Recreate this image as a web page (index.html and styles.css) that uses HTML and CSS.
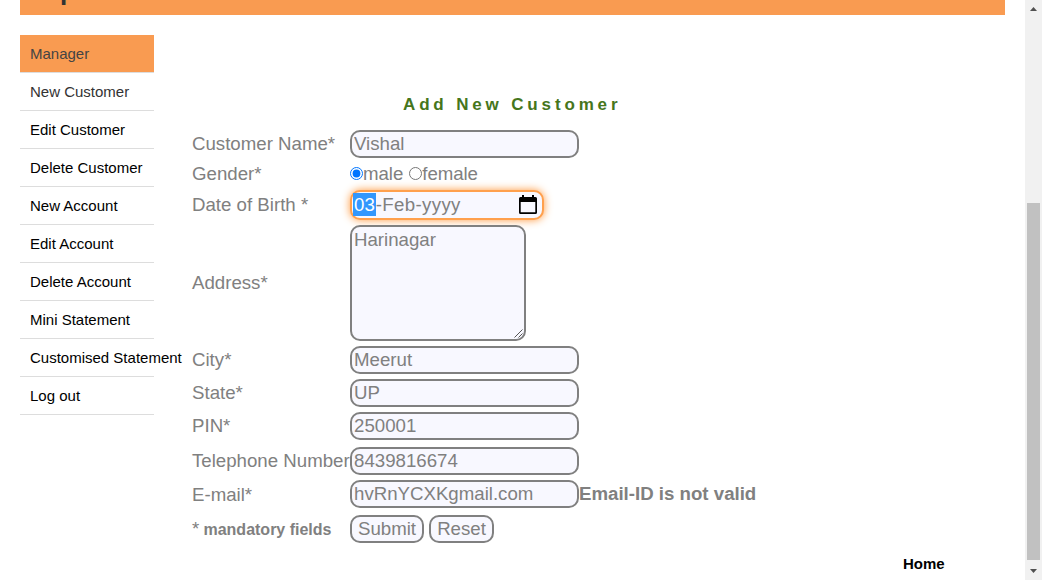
FILE: index.html
```html
<!DOCTYPE html>
<html lang="en">
<head>
<meta charset="utf-8">
<title>Add New Customer</title>
<link rel="stylesheet" href="styles.css">
</head>
<body>
<div class="page">
  <header class="banner"><span class="banner-text">p</span></header>
  <div class="columns">
    <nav class="menu">
      <a class="active">Manager</a>
      <a class="muted">New Customer</a>
      <a>Edit Customer</a>
      <a>Delete Customer</a>
      <a>New Account</a>
      <a>Edit Account</a>
      <a>Delete Account</a>
      <a>Mini Statement</a>
      <a>Customised Statement</a>
      <a>Log out</a>
    </nav>
    <main class="content">
      <h1 class="title">Add New Customer</h1>
      <form class="form">
        <label>Customer Name*</label>
        <div class="cell"><input class="field" type="text" value="Vishal"></div>
        <label>Gender*</label>
        <div class="cell gender"><input class="radio" type="radio" name="gender" checked><span>male</span><input class="radio second" type="radio" name="gender"><span>female</span></div>
        <label>Date of Birth *</label>
        <div class="cell">
          <div class="date"><span class="selected">03</span><span class="rest">-Feb-yyyy</span>
            <svg class="calendar" width="18" height="20" viewBox="0 0 18 20"><path fill="#000" fill-rule="evenodd" d="M1.500 2H3V0h2v2h8V0h2v2h1.500Q18 2 18 3.500v14Q18 19 16.500 19h-15Q0 19 0 17.500v-14Q0 2 1.500 2zM1.700 7v10.300h14.600V7z"/></svg>
          </div>
        </div>
        <label>Address*</label>
        <div class="cell"><div class="area">Harinagar
          <svg class="grip" width="9" height="9" viewBox="0 0 9 9"><path d="M0.500 8.500l8-8M4.500 8.500l4-4" stroke="#555" fill="none"/></svg></div></div>
        <label>City*</label>
        <div class="cell"><input class="field" type="text" value="Meerut"></div>
        <label>State*</label>
        <div class="cell"><input class="field" type="text" value="UP"></div>
        <label>PIN*</label>
        <div class="cell"><input class="field" type="text" value="250001"></div>
        <label>Telephone Number</label>
        <div class="cell"><input class="field" type="text" value="8439816674"></div>
        <label class="low">E-mail*</label>
        <div class="cell"><input class="field" type="text" value="hvRnYCXKgmail.com"><span class="error">Email-ID is not valid</span></div>
        <label>* <span class="note">mandatory fields</span></label>
        <div class="cell buttons"><button class="button submit" type="button">Submit</button><button class="button reset" type="button">Reset</button></div>
      </form>
      <a class="home">Home</a>
    </main>
  </div>
</div>
<aside class="scrollbar">
  <svg class="arrow" width="17" height="17" viewBox="0 0 17 17"><path d="M5 11l3.500-4L12 11z" fill="#505050"/></svg>
  <div class="thumb"></div>
  <svg class="arrow" width="17" height="17" viewBox="0 0 17 17"><path d="M5 6l3.500 4L12 6z" fill="#505050"/></svg>
</aside>
</body>
</html>
```
FILE: styles.css
```css
* { box-sizing: border-box; }
body {
  margin: 0;
  height: 580px;
  display: flex;
  overflow: hidden;
  background: #fff;
  color: gray;
  font-family: "Liberation Sans", Arial, sans-serif;
  font-size: 18.667px;
}
.page { width: 1025px; padding: 0 20px; }
.banner { height: 15px; background: #f99b51; overflow: hidden; padding-left: 40px; }
.banner-text { display: block; margin-top: -21px; color: #333; font-size: 26px; font-weight: bold; line-height: 24px; }
.columns { display: flex; padding-top: 20px; }
.menu { width: 134px; flex: none; font-size: 15px; color: #000; }
.menu a {
  display: block;
  height: 38px;
  padding-left: 10px;
  line-height: 37px;
  white-space: nowrap;
  border-bottom: 1px solid #ddd;
}
.menu .active { color: #444; background: #f99b51; background-clip: padding-box; }
.menu .muted { color: #333; }
.content { flex: 1; padding: 60px 0 0 38px; }
.title {
  margin: 0 0 13px 211px;
  height: 20px;
  line-height: 20px;
  color: #46761c;
  font-size: 17px;
  letter-spacing: 3.85px;
}
.form {
  display: grid;
  grid-template-columns: 158px 1fr;
  grid-template-rows: 32px 28px 34px 122px 32px 34px 32px 38px 28px 42px;
  align-items: center;
  white-space: nowrap;
}
.low { padding-top: 1px; }
.cell { display: flex; align-items: center; }
.field, .button, .area {
  border: 2px solid gray;
  border-radius: 10px;
  background: #f8f8ff;
  color: gray;
  font: inherit;
}
.field { width: 229px; height: 28px; padding: 1px 2px; }
.gender { line-height: 24px; letter-spacing: -0.05px; }
.radio { width: 13px; height: 13px; margin: 0 0 2px; }
.second { margin-left: 6px; }
.date {
  display: flex;
  align-items: center;
  width: 194px;
  height: 30px;
  padding: 0 5px 0 2px;
  border: 2px solid #ffa04d;
  border-radius: 10px;
  background: #f8f8ff;
  box-shadow: 0 0 9px #ff983d;
}
.selected { margin: 0 0 1px -1px; padding: 0 1px; color: #fff; background: #3297fd; line-height: 23px; }
.rest { letter-spacing: 0.35px; }
.calendar { margin-left: auto; }
.area { position: relative; width: 176px; height: 116px; padding: 2px; }
.grip { position: absolute; right: 1px; bottom: 1px; }
.error { font-weight: bold; }
.note { margin-left: -1px; font-size: 16px; font-weight: bold; }
.buttons { gap: 5px; }
.button { height: 28px; padding: 0; }
.submit { width: 74px; }
.reset { width: 65px; }
.home {
  display: block;
  margin: 5px 0 0 711px;
  color: #000;
  font-size: 15px;
  font-weight: bold;
  line-height: 18px;
}
.scrollbar { display: flex; flex-direction: column; width: 17px; background: #f1f1f1; }
.arrow { display: block; }
.thumb { height: 357px; margin: 186px 2px 3px; background: #c1c1c1; }
```
